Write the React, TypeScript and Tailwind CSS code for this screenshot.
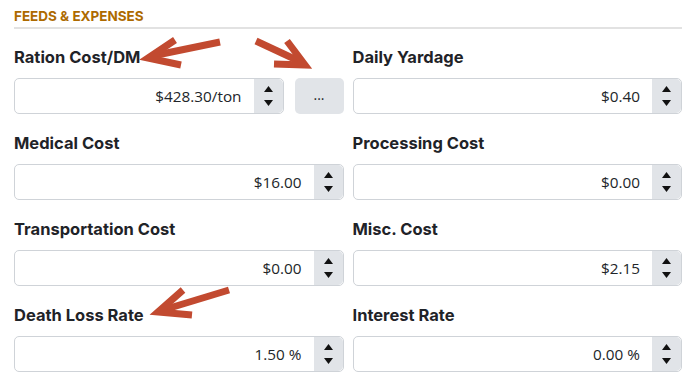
import React from "react";

const fields = [
  { label: "Ration Cost/DM", value: "$428.30/ton", extra: true },
  { label: "Daily Yardage", value: "$0.40" },
  { label: "Medical Cost", value: "$16.00" },
  { label: "Processing Cost", value: "$0.00" },
  { label: "Transportation Cost", value: "$0.00" },
  { label: "Misc. Cost", value: "$2.15" },
  { label: "Death Loss Rate", value: "1.50 %" },
  { label: "Interest Rate", value: "0.00 %" },
];

function Spinner() {
  return (
    <div className="flex w-[29px] shrink-0 flex-col items-center justify-center gap-[8px] rounded-r-[5px] bg-[#e1e4e8]">
      <svg width="9" height="6" viewBox="0 0 9 6">
        <path d="M4.5 0 L9 6 L0 6 Z" fill="#111" />
      </svg>
      <svg width="9" height="6" viewBox="0 0 9 6">
        <path d="M0 0 L9 0 L4.5 6 Z" fill="#111" />
      </svg>
    </div>
  );
}

function Field({ label, value, extra }: { label: string; value: string; extra?: boolean }) {
  return (
    <div className="flex flex-col">
      <div className="h-[20px] font-['Inter',sans-serif] text-[16.5px] font-bold leading-[20px] text-[#1f2328]">
        {label}
      </div>
      <div className="mt-[11px] flex h-[36px] gap-[11px]">
        <div className="flex min-w-0 flex-1 rounded-[5px] border border-[#cfd3d8] bg-white">
          <div className="flex flex-1 items-center justify-end pr-[12px] font-['Open_Sans',sans-serif] text-[15.3px] text-[#212529]">
            {value}
          </div>
          <Spinner />
        </div>
        {extra && (
          <button className="flex w-[49px] items-center justify-center rounded-[5px] bg-[#e1e4e8] pb-[4px] font-['Open_Sans',sans-serif] text-[14px] text-[#212529]">
            ...
          </button>
        )}
      </div>
    </div>
  );
}

export default function App() {
  return (
    <div className="relative h-[386px] w-[694px] overflow-hidden bg-white pl-[14px] pr-[12px] pt-[8px]">
      <div className="border-b-2 border-[#e2e2e2] pb-[3px] font-['Inter',sans-serif] text-[13.5px] font-bold uppercase leading-[16px] text-[#ad6a00]">
        Feeds &amp; Expenses
      </div>
      <div className="mt-[18px] grid grid-cols-2 gap-x-[9px] gap-y-[19px]">
        {fields.map((f) => (
          <Field key={f.label} {...f} />
        ))}
      </div>
      <svg className="pointer-events-none absolute left-0 top-0" width="694" height="386">
        <g stroke="#c24a30" strokeWidth="7" fill="none" strokeLinejoin="miter" strokeMiterlimit="10">
          <line x1="152" y1="56" x2="220" y2="42" />
          <polyline points="175,40 148,58 181,65" />
          <line x1="256" y1="41" x2="301" y2="62" />
          <polyline points="287,41 305,65 274,64" />
          <line x1="163" y1="310" x2="229" y2="290" />
          <polyline points="183,290 158,312 192,315" />
        </g>
      </svg>
    </div>
  );
}
